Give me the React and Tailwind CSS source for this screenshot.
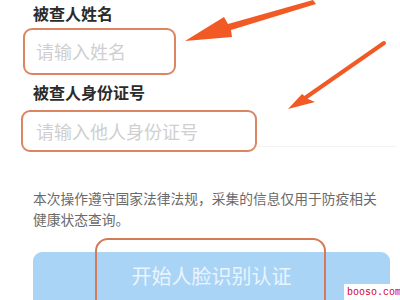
import React from 'react';

const font = { fontFamily: '"Noto Sans CJK SC", "Noto Sans", sans-serif' };

function Arrows() {
    return (
        <svg className="absolute left-0 top-0 pointer-events-none" width="400" height="300" viewBox="0 0 400 300">
            {/* top arrow */}
            <path d="M313 0 L316 4 L231 30 L232 37 L185 41 L224 17 L228 24 Z" fill="#f15a24" />
            {/* second arrow */}
            <line x1="384" y1="43" x2="305" y2="98" stroke="#f15a24" strokeWidth="4" strokeLinecap="round" />
            <path d="M288 109 L302 94 L308 99 L315 102 Z" fill="#f15a24" />
        </svg>
    );
}

export default function App() {
    return (
        <div className="relative w-[400px] h-[300px] overflow-hidden bg-white" style={font}>
            {/* Form */}
            <div className="pl-[21px] pt-[4px]">
                <div className="ml-[12px] text-[16px] leading-[19px] font-bold text-[#2b2b2b]">被查人姓名</div>
                <div className="mt-[5px] ml-[2px] w-[153px] h-[47px] rounded-[9px] border-2 border-[#dc8563] flex items-center pl-[11px] text-[18px] text-[#cfcfcf]">
                    请输入姓名
                </div>

                <div className="mt-[8px] ml-[12px] text-[16px] leading-[19px] font-bold text-[#2b2b2b]">被查人身份证号</div>
                <div className="mt-[8px] flex items-start">
                    <div className="w-[236px] h-[42px] rounded-[9px] border-2 border-[#dc8563] flex items-center pl-[13px] text-[18px] text-[#cfcfcf]">
                        请输入他人身份证号
                    </div>
                    <div className="flex-1 h-[37px] border-b border-[#f3f3f3] mr-[4px]"></div>
                </div>
            </div>

            {/* Notice */}
            <p className="mt-[36px] pl-[33px] w-[390px] text-[13.75px] leading-[21px] text-[#6b6b6b]">
                本次操作遵守国家法律法规，采集的信息仅用于防疫相关健康状态查询。
            </p>

            {/* Button */}
            <div className="mt-[22px] ml-[33px] w-[357px] h-[48px] rounded-t-[9px] bg-[#aad4f6] flex items-center justify-center text-[20px] text-[#e9f4fd]">
                开始人脸识别认证
            </div>

            {/* annotations */}
            <div className="absolute left-[95px] top-[238px] w-[231px] h-[80px] rounded-[13px] border-2 border-[#d47a57]"></div>
            <Arrows />

            <div className="absolute right-0 bottom-0 w-[56px] h-[16px] bg-white flex items-end pl-[3px] text-[10px] leading-[14px] text-[#d9002b]" style={{ fontFamily: '"Liberation Mono", monospace' }}>
                booso.com
            </div>
        </div>
    );
}
